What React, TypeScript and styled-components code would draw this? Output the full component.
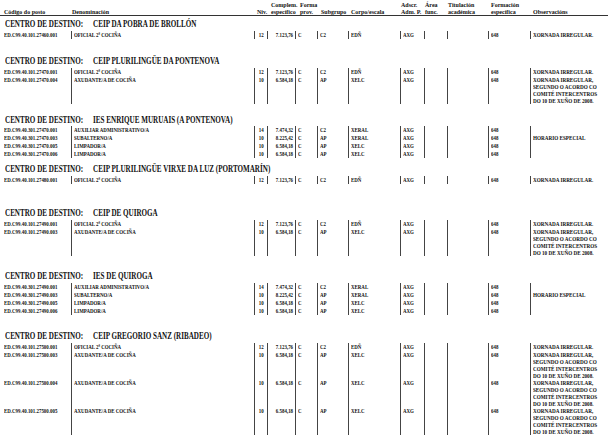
import styled, { createGlobalStyle } from "styled-components";

const GlobalStyle = createGlobalStyle`
  html, body {
    margin: 0;
    padding: 0;
    background: #ffffff;
  }
  body {
    font-family: "Liberation Serif", "Times New Roman", serif;
    color: #111111;
  }
`;

const COLS = "71px 183px 13px 28px 22px 31px 52px 24px 23px 41px 42px 1fr";

type Post = {
  code: string;
  den: string;
  niv: string;
  comp: string;
  sub: string;
  corpo: string;
  obs: string[];
};

type Centre = {
  gap: number;
  name: string;
  posts: Post[];
};

const ACORDO = [
  "XORNADA IRREGULAR,",
  "SEGUNDO O ACORDO CO",
  "COMITÉ INTERCENTROS",
  "DO 10 DE XUÑO DE 2008."
];

const oficial = (code: string): Post => ({
  code,
  den: "OFICIAL 2ª COCIÑA",
  niv: "12",
  comp: "7.123,76",
  sub: "C2",
  corpo: "EDÑ",
  obs: ["XORNADA IRREGULAR."]
});

const axudante = (code: string): Post => ({
  code,
  den: "AXUDANTE/A DE COCIÑA",
  niv: "10",
  comp: "6.584,18",
  sub: "AP",
  corpo: "XELC",
  obs: ACORDO
});

const ies = (base: string): Post[] => [
  {
    code: base + ".001",
    den: "AUXILIAR ADMINISTRATIVO/A",
    niv: "14",
    comp: "7.474,32",
    sub: "C2",
    corpo: "XERAL",
    obs: []
  },
  {
    code: base + ".003",
    den: "SUBALTERNO/A",
    niv: "10",
    comp: "8.225,42",
    sub: "AP",
    corpo: "XERAL",
    obs: ["HORARIO ESPECIAL"]
  },
  {
    code: base + ".005",
    den: "LIMPADOR/A",
    niv: "10",
    comp: "6.584,18",
    sub: "AP",
    corpo: "XELC",
    obs: []
  },
  {
    code: base + ".006",
    den: "LIMPADOR/A",
    niv: "10",
    comp: "6.584,18",
    sub: "AP",
    corpo: "XELC",
    obs: []
  }
];

const centres: Centre[] = [
  {
    gap: 3,
    name: "CEIP DA POBRA DE BROLLÓN",
    posts: [oficial("ED.C99.40.101.27460.001")]
  },
  {
    gap: 14.5,
    name: "CEIP PLURILINGÜE DA PONTENOVA",
    posts: [oficial("ED.C99.40.101.27470.001"), axudante("ED.C99.40.101.27470.004")]
  },
  {
    gap: 8,
    name: "IES ENRIQUE MURUAIS (A PONTENOVA)",
    posts: ies("ED.C99.40.301.27470")
  },
  {
    gap: 3,
    name: "CEIP PLURILINGÜE VIRXE DA LUZ (PORTOMARÍN)",
    posts: [oficial("ED.C99.40.101.27480.001")]
  },
  {
    gap: 21.5,
    name: "CEIP DE QUIROGA",
    posts: [oficial("ED.C99.40.101.27490.001"), axudante("ED.C99.40.101.27490.003")]
  },
  {
    gap: 12.5,
    name: "IES DE QUIROGA",
    posts: ies("ED.C99.40.301.27490")
  },
  {
    gap: 13.5,
    name: "CEIP GREGORIO SANZ (RIBADEO)",
    posts: [
      oficial("ED.C99.40.101.27500.001"),
      axudante("ED.C99.40.101.27500.003"),
      axudante("ED.C99.40.101.27500.004"),
      axudante("ED.C99.40.101.27500.005")
    ]
  }
];

const headCols: { lines: string[]; pad: number }[] = [
  { lines: ["Código do posto"], pad: 4 },
  { lines: ["Denominación"], pad: 1 },
  { lines: ["Niv."], pad: 3 },
  { lines: ["Complem.", "específico"], pad: 4 },
  { lines: ["Forma", "prov."], pad: 5 },
  { lines: ["Subgrupo"], pad: 4 },
  { lines: ["Corpo/escala"], pad: 3 },
  { lines: ["Adscr.", "Adm. P."], pad: 1 },
  { lines: ["Área", "func."], pad: 1 },
  { lines: ["Titulación", "académica"], pad: 1 },
  { lines: ["Formación", "específica"], pad: 3 },
  { lines: ["Observacións"], pad: 3 }
];

const Page = styled.div`
  width: 615px;
  height: 439px;
  overflow: hidden;
  font-weight: bold;
`;

const Header = styled.div`
  display: grid;
  grid-template-columns: ${COLS};
  align-items: end;
  height: 15px;
  margin-right: 7px;
  border-bottom: 1px solid #333333;
  font-size: 6px;
  line-height: 6.5px;
`;

const HeadCell = styled.div<{ $pad: number }>`
  padding-left: ${(p) => p.$pad}px;
  white-space: nowrap;
`;

const Section = styled.section<{ $gap: number }>`
  margin-top: ${(p) => p.$gap}px;
`;

const Heading = styled.div`
  height: 10px;
  line-height: 10px;
  padding-left: 5px;
  margin-bottom: 1.5px;
  font-size: 10px;
  white-space: nowrap;
`;

const HeadingInner = styled.div`
  display: inline-flex;
  transform: scaleX(0.71);
  transform-origin: left center;
`;

const HeadingLabel = styled.span`
  width: 124px;
`;

const Row = styled.div<{ $tail: boolean }>`
  display: grid;
  grid-template-columns: ${COLS};
  padding-bottom: ${(p) => (p.$tail ? 3 : 0)}px;
  font-size: 6.3px;
  line-height: 8px;
`;

const Cell = styled.div<{ $bar?: boolean; $pad?: number; $align?: "left" | "center" | "right" }>`
  border-left: ${(p) => (p.$bar === false ? "none" : "1px solid #444444")};
  padding-left: ${(p) => p.$pad ?? 2}px;
  padding-right: ${(p) => (p.$align === "right" ? 2 : 0)}px;
  text-align: ${(p) => p.$align ?? "left"};
  white-space: nowrap;
  min-height: 8px;
`;

const Txt = styled.span<{ $origin?: string }>`
  display: inline-block;
  transform: scaleX(0.78);
  transform-origin: ${(p) => p.$origin ?? "left"} center;
`;

const ObsLine = styled.div<{ $multi: boolean }>`
  line-height: ${(p) => (p.$multi ? 7 : 8)}px;
  transform: scaleX(0.82);
  transform-origin: left center;
`;

const PostRow = ({ post, tail }: { post: Post; tail: boolean }) => (
  <Row $tail={tail}>
    <Cell $bar={false} $pad={4}>
      <Txt>{post.code}</Txt>
    </Cell>
    <Cell>
      <Txt>{post.den}</Txt>
    </Cell>
    <Cell $align="center" $pad={0}>
      <Txt $origin="center">{post.niv}</Txt>
    </Cell>
    <Cell $align="right" $pad={0}>
      <Txt $origin="right">{post.comp}</Txt>
    </Cell>
    <Cell>
      <Txt>C</Txt>
    </Cell>
    <Cell>
      <Txt>{post.sub}</Txt>
    </Cell>
    <Cell>
      <Txt>{post.corpo}</Txt>
    </Cell>
    <Cell>
      <Txt>AXG</Txt>
    </Cell>
    <Cell />
    <Cell />
    <Cell>
      <Txt>648</Txt>
    </Cell>
    <Cell>
      {post.obs.map((o) => (
        <ObsLine key={o} $multi={post.obs.length > 1}>
          {o}
        </ObsLine>
      ))}
    </Cell>
  </Row>
);

const App = () => {
  return (
    <>
      <GlobalStyle />
      <Page>
        <Header>
          {headCols.map((h, i) => (
            <HeadCell key={i} $pad={h.pad}>
              {h.lines.map((l) => (
                <div key={l}>{l}</div>
              ))}
            </HeadCell>
          ))}
        </Header>

        {centres.map((c) => (
          <Section key={c.name} $gap={c.gap}>
            <Heading>
              <HeadingInner>
                <HeadingLabel>CENTRO DE DESTINO:</HeadingLabel>
                <span>{c.name}</span>
              </HeadingInner>
            </Heading>
            {c.posts.map((p, i) => (
              <PostRow key={p.code} post={p} tail={i === c.posts.length - 1} />
            ))}
          </Section>
        ))}
      </Page>
    </>
  );
};

export default App;
